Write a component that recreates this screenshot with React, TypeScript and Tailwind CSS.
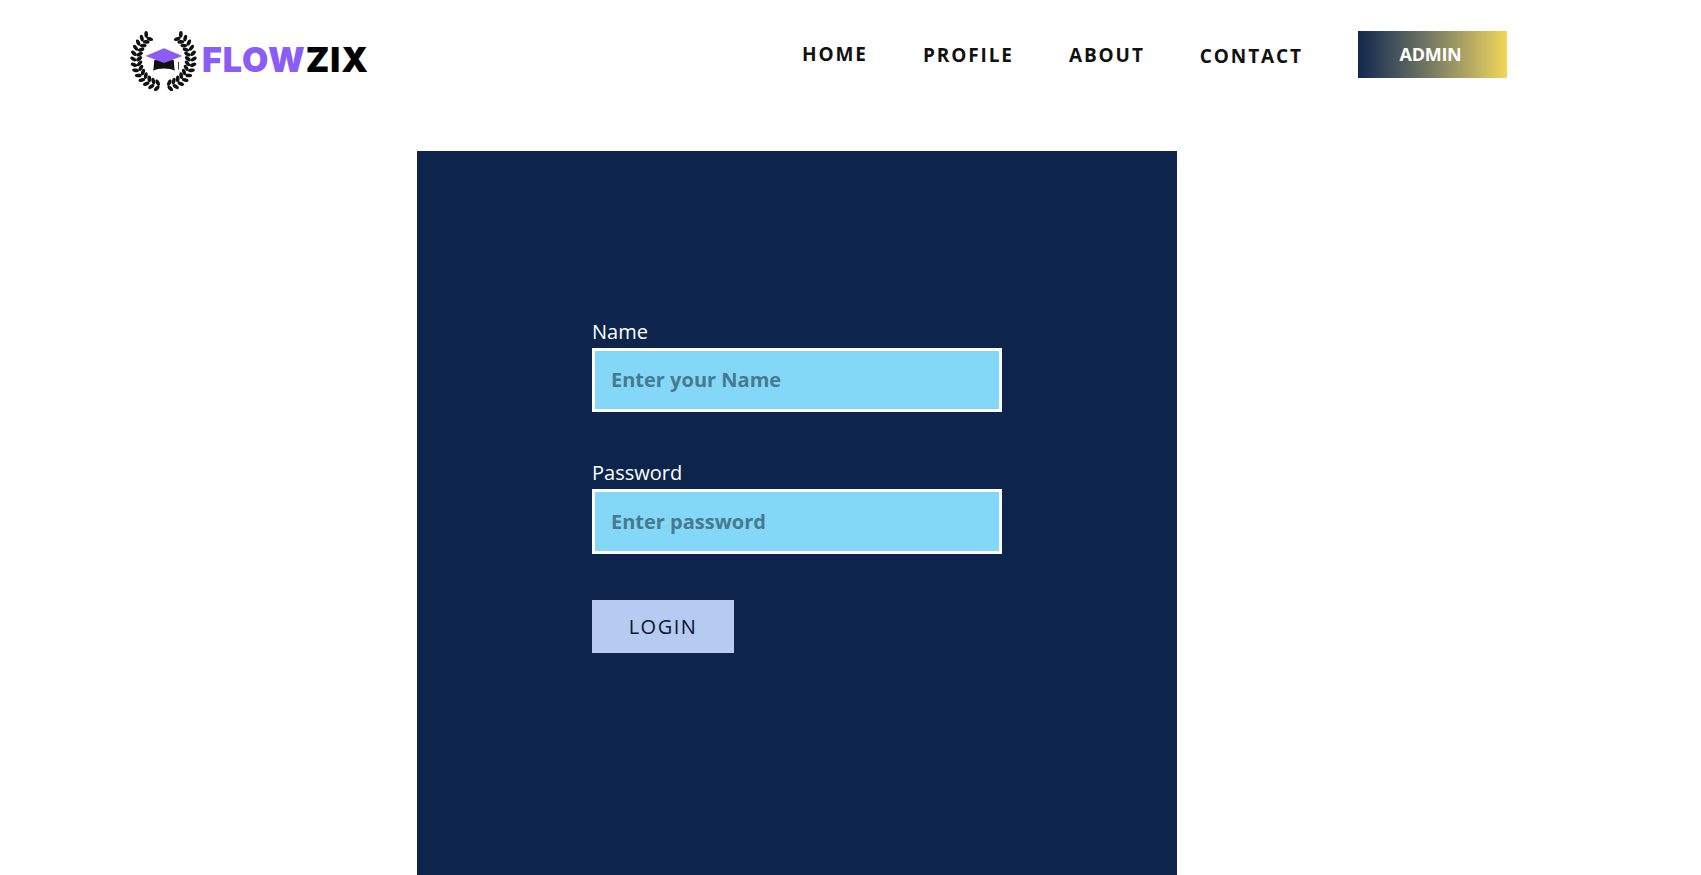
const openSans = "font-['Open_Sans',sans-serif]";

// laurel leaves placed along the wreath circle
const LEAVES = [-52, -41, -30, -19, -8, 3, 14, 25, 36, 47, 58, 69, 80];

function Logo() {
  return (
    <svg width="68" height="62" viewBox="0 0 70 62" className="shrink-0">
      {[1, -1].map((side) => (
        <g key={side} transform={side === -1 ? "translate(69 0) scale(-1 1)" : undefined}>
          {LEAVES.map((a) => {
            const rad = (a * Math.PI) / 180;
            const x = 34.5 - 28 * Math.cos(rad);
            const y = 30 + 28 * Math.sin(rad);
            return (
              <g key={a} transform={`translate(${x} ${y}) rotate(${-a})`}>
                <ellipse cx="-3" cy="-1.6" rx="3.5" ry="1.9" fill="#111" transform="rotate(35 -3 -1.6)" />
                <ellipse cx="3" cy="-1.6" rx="3.5" ry="1.9" fill="#111" transform="rotate(-35 3 -1.6)" />
              </g>
            );
          })}
        </g>
      ))}
      <path d="M25 31 L45 31 L46 42 C41 39 29 39 24 42 Z" fill="#111" />
      <path d="M35 19 L54 27 L35 34 L16 27 Z" fill="#8b5cf6" />
      <path d="M50 33 L50 41" stroke="#333" strokeWidth="1" />
    </svg>
  );
}

function Field({ label, placeholder, type = "text", height = "h-[64px]" }: { label: string; placeholder: string; type?: string; height?: string }) {
  return (
    <label className="block">
      <span className="mb-[3px] block text-[20px] leading-[27px] text-white">{label}</span>
      <input
        type={type}
        placeholder={placeholder}
        className={`block ${height} w-[410px] border-[3px] border-white bg-[#84d8f7] pb-[1px] pl-[16px] text-[20px] font-bold text-black outline-none placeholder:text-[#47798f]`}
      />
    </label>
  );
}

export default function App() {
  return (
    <div className={`flex h-screen flex-col overflow-hidden bg-white ${openSans}`}>
      <header className="flex h-[151px] shrink-0 items-start pl-[130px] pr-[194px]">
        <div className="mt-[29px] flex items-center">
          <Logo />
          <span className="ml-[4px] font-['Inter',sans-serif] text-[34px] font-black leading-none tracking-[1px]">
            <span className="text-[#8b5cf6]">FLOW</span>
            <span className="text-black">ZIX</span>
          </span>
        </div>
        <nav className="ml-auto flex items-start gap-[55px] text-[19px] font-bold tracking-[1.9px] text-[#111]">
          <a className="mt-[40px] leading-[28px]">HOME</a>
          <a className="mt-[41px] leading-[28px]">PROFILE</a>
          <a className="mt-[41px] leading-[28px]">ABOUT</a>
          <a className="mt-[42px] leading-[28px]">CONTACT</a>
          <button className="mt-[31px] h-[47px] w-[149px] bg-gradient-to-r from-[#14274e] to-[#f2d755] pr-[4px] text-[18px] font-bold tracking-[-0.3px] text-white">
            ADMIN
          </button>
        </nav>
      </header>
      <main className="ml-[417px] w-[760px] flex-1 bg-[#0d254c] pl-[175px] pt-[167px]">
        <form className="flex flex-col">
          <Field label="Name" placeholder="Enter your Name" />
          <div className="mt-[47px]">
            <Field label="Password" placeholder="Enter password" type="password" height="h-[65px]" />
          </div>
          <button
            type="button"
            className="mt-[46px] h-[53px] w-[142px] bg-[#b5cbf2] text-[20px] tracking-[1.5px] text-[#0a142c]"
          >
            LOGIN
          </button>
        </form>
      </main>
    </div>
  );
}
